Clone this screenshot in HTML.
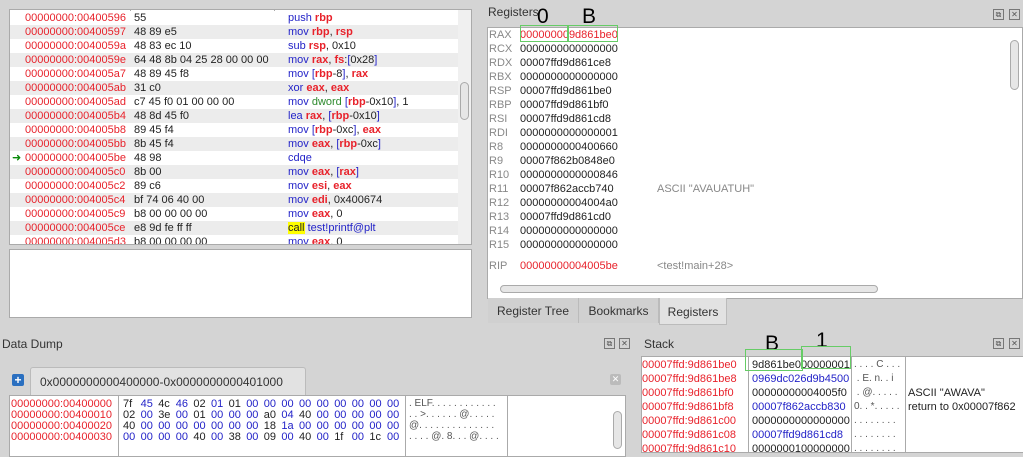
<!DOCTYPE html>
<html><head><style>
body{margin:0;width:1023px;height:447px;background:#d4d4d4;font-family:"Liberation Sans","DejaVu Sans",sans-serif;font-size:11px;position:relative;overflow:hidden;color:#222}
.a{position:absolute}
.box{position:absolute;background:#fff;border:1px solid #aaa}
.r{color:#e8222b}.b{color:#2323c8}.g{color:#2d8a2d}.rb{color:#e8222b;font-weight:bold}
.row{position:absolute;left:0;height:14px;line-height:14px;white-space:pre}
.sb{position:absolute;background:#e6e6e6;border:1px solid #aaa;border-radius:6px}
.lbl{position:absolute;font-size:21px;color:#000;line-height:21px}
.gb{position:absolute;border:1px solid #6c6}
.ic{position:absolute;width:9px;height:9px;border:1px solid #777;font-size:8px;line-height:9px;text-align:center;color:#555}
</style></head><body>
<div class="box" style="left:9px;top:9px;width:461px;height:234px;overflow:hidden">
<div class="a" style="left:120px;top:0;width:1px;height:234px;background:#aaa"></div>
<div class="a" style="left:264px;top:0;width:1px;height:234px;background:#aaa"></div>
<div id="dis"></div>
<div class="a" style="left:448px;top:0;width:13px;height:234px;background:#f0f0f0"></div>
<div class="sb" style="left:450px;top:72px;width:7px;height:36px"></div>
</div>
<div class="box" style="left:9px;top:249px;width:461px;height:67px"></div>

<div class="a" style="left:488px;top:5px;font-size:12px;color:#333">Registers</div>
<div class="ic" style="left:993px;top:9px">⧉</div><div class="ic" style="left:1009px;top:9px">✕</div>
<div class="box" style="left:487px;top:27px;width:534px;height:270px;background:#fff"></div>
<div id="regs"></div>
<div class="sb" style="left:1010px;top:40px;width:7px;height:48px"></div>
<div class="sb" style="left:500px;top:285px;width:376px;height:6px"></div>
<div class="a" style="left:488px;top:298px;width:90px;height:25px;background:#d0d0d0;border-right:1px solid #bbb;line-height:26px;text-align:center;font-size:12px;color:#333">Register Tree</div>
<div class="a" style="left:579px;top:298px;width:79px;height:25px;background:#d0d0d0;border-right:1px solid #bbb;line-height:26px;text-align:center;font-size:12px;color:#333">Bookmarks</div>
<div class="a" style="left:659px;top:298px;width:66px;height:26px;background:#e2e2e2;border:1px solid #bbb;border-top:none;line-height:28px;text-align:center;font-size:12px;color:#333">Registers</div>
<div class="lbl" style="left:537px;top:6px">0</div>
<div class="lbl" style="left:582px;top:6px">B</div>
<div class="gb" style="left:520px;top:25px;width:47px;height:15px"></div>
<div class="gb" style="left:567px;top:25px;width:49px;height:15px"></div>

<div class="a" style="left:2px;top:337px;font-size:12px;color:#333">Data Dump</div>
<div class="ic" style="left:604px;top:338px">⧉</div><div class="ic" style="left:619px;top:338px">✕</div>
<div class="a" style="left:12px;top:374px;width:12px;height:12px;background:#2a6fc0;border-radius:2px;color:#fff;font-size:12px;line-height:12px;text-align:center;font-weight:bold">+</div>
<div class="a" style="left:30px;top:367px;width:276px;height:28px;background:#e2e2e2;border:1px solid #bbb;border-bottom:none;border-radius:3px 3px 0 0;line-height:28px;font-size:12px;color:#333;padding-left:9px;box-sizing:border-box">0x0000000000400000-0x0000000000401000</div>
<div class="a" style="left:610px;top:374px;width:11px;height:11px;background:#bbb;border-radius:2px;color:#fff;font-size:9px;line-height:11px;text-align:center">✕</div>
<div class="box" style="left:9px;top:395px;width:615px;height:60px;overflow:hidden">
<div class="a" style="left:108px;top:0;width:1px;height:60px;background:#aaa"></div>
<div class="a" style="left:395px;top:0;width:1px;height:60px;background:#aaa"></div>
<div class="a" style="left:497px;top:0;width:1px;height:60px;background:#aaa"></div>
<div id="dump"></div>
<div class="sb" style="left:603px;top:15px;width:7px;height:36px"></div>
</div>

<div class="a" style="left:644px;top:337px;font-size:12px;color:#333">Stack</div>
<div class="ic" style="left:993px;top:338px">⧉</div><div class="ic" style="left:1009px;top:338px">✕</div>
<div class="box" style="left:641px;top:356px;width:382px;height:95px;overflow:hidden;border-right:none">
<div class="a" style="left:106px;top:0;width:1px;height:95px;background:#aaa"></div>
<div class="a" style="left:209px;top:0;width:1px;height:95px;background:#aaa"></div>
<div class="a" style="left:263px;top:0;width:1px;height:95px;background:#aaa"></div>
<div id="stk"></div>
</div>
<div class="lbl" style="left:765px;top:333px">B</div>
<div class="lbl" style="left:816px;top:330px">1</div>
<div class="gb" style="left:745px;top:349px;width:56px;height:20px"></div>
<div class="gb" style="left:801px;top:346px;width:48px;height:21px"></div>

<script>
const d=[
["00400596","55",'<span class="b">push </span><span class="rb">rbp</span>'],
["00400597","48 89 e5",'<span class="b">mov </span><span class="rb">rbp</span>, <span class="rb">rsp</span>'],
["0040059a","48 83 ec 10",'<span class="b">sub </span><span class="rb">rsp</span>, 0x10'],
["0040059e","64 48 8b 04 25 28 00 00 00",'<span class="b">mov </span><span class="rb">rax</span>, <span class="rb">fs</span>:<span class="b">[</span>0x28<span class="b">]</span>'],
["004005a7","48 89 45 f8",'<span class="b">mov [</span><span class="rb">rbp</span>-8<span class="b">]</span>, <span class="rb">rax</span>'],
["004005ab","31 c0",'<span class="b">xor </span><span class="rb">eax</span>, <span class="rb">eax</span>'],
["004005ad","c7 45 f0 01 00 00 00",'<span class="b">mov </span><span class="g">dword</span> <span class="b">[</span><span class="rb">rbp</span>-0x10<span class="b">]</span>, 1'],
["004005b4","48 8d 45 f0",'<span class="b">lea </span><span class="rb">rax</span>, <span class="b">[</span><span class="rb">rbp</span>-0x10<span class="b">]</span>'],
["004005b8","89 45 f4",'<span class="b">mov [</span><span class="rb">rbp</span>-0xc<span class="b">]</span>, <span class="rb">eax</span>'],
["004005bb","8b 45 f4",'<span class="b">mov </span><span class="rb">eax</span>, <span class="b">[</span><span class="rb">rbp</span>-0xc<span class="b">]</span>'],
["004005be","48 98",'<span class="b">cdqe</span>'],
["004005c0","8b 00",'<span class="b">mov </span><span class="rb">eax</span>, <span class="b">[</span><span class="rb">rax</span><span class="b">]</span>'],
["004005c2","89 c6",'<span class="b">mov </span><span class="rb">esi</span>, <span class="rb">eax</span>'],
["004005c4","bf 74 06 40 00",'<span class="b">mov </span><span class="rb">edi</span>, 0x400674'],
["004005c9","b8 00 00 00 00",'<span class="b">mov </span><span class="rb">eax</span>, 0'],
["004005ce","e8 9d fe ff ff",'<span style="background:#ff0">call</span> <span class="b">test!printf@plt</span>'],
["004005d3","b8 00 00 00 00",'<span class="b">mov </span><span class="rb">eax</span>, 0']];
let h='';d.forEach((x,i)=>{h+=`<div class="row" style="top:${1+i*14}px;width:448px;background:${i%2?'#ececec':'#fff'}">`+
`<span class="a" style="left:2px;color:#0a8a0a">${i==10?'➜':''}</span><span class="a r" style="left:15px">00000000:${x[0]}</span><span class="a" style="left:124px">${x[1]}</span><span class="a" style="left:278px">${x[2]}</span></div>`});
document.getElementById('dis').innerHTML=h;
const r=[["RAX","000000009d861be0"],["RCX","0000000000000000"],["RDX","00007ffd9d861ce8"],["RBX","0000000000000000"],["RSP","00007ffd9d861be0"],["RBP","00007ffd9d861bf0"],["RSI","00007ffd9d861cd8"],["RDI","0000000000000001"],["R8","0000000000400660"],["R9","00007f862b0848e0"],["R10","0000000000000846"],["R11","00007f862accb740","ASCII \"AVAUATUH\""],["R12","00000000004004a0"],["R13","00007ffd9d861cd0"],["R14","0000000000000000"],["R15","0000000000000000"]];
h='';r.forEach((x,i)=>{let y=28+i*14;h+=`<div class="row" style="top:${y}px;left:489px;color:#888">${x[0]}</div><div class="row ${i==0?'r':''}" style="top:${y}px;left:520px;font-size:11px">${x[1]}</div>`+(x[2]?`<div class="row" style="top:${y}px;left:657px;color:#888">${x[2]}</div>`:'')});
h+=`<div class="row" style="top:259px;left:489px;color:#888">RIP</div><div class="row r" style="top:259px;left:520px;font-size:11px">00000000004005be</div><div class="row" style="top:259px;left:657px;color:#888">&lt;test!main+28&gt;</div>`;
document.getElementById('regs').innerHTML=h;
const dm=[["00400000","7f 45 4c 46 02 01 01 00 00 00 00 00 00 00 00 00",". ELF. . . . . . . . . . . ."],["00400010","02 00 3e 00 01 00 00 00 a0 04 40 00 00 00 00 00",". . >. . . . . . @. . . . ."],["00400020","40 00 00 00 00 00 00 00 18 1a 00 00 00 00 00 00","@. . . . . . . . . . . . . ."],["00400030","00 00 00 00 40 00 38 00 09 00 40 00 1f 00 1c 00",". . . . @. 8. . . @. . . ."]];
h='';dm.forEach((x,i)=>{let y=i*11+1;h+=`<div class="row r" style="top:${y}px;left:1px;font-size:11px">00000000:${x[0]}</div>`;x[1].split(' ').forEach((b,j)=>{h+=`<div class="row ${b=='00'||j%2?'b':''}" style="top:${y}px;left:${113+j*17.6}px;font-size:11px">${b}</div>`});h+=`<div class="row" style="top:${y}px;left:399px;font-size:10px;color:#555">${x[2]}</div>`});
document.getElementById('dump').innerHTML=h;
const s=[["be0","9d861be000000001",0,". . . . C . . ."],["be8","0969dc026d9b4500",1," . E. n. . i"],["bf0","00000000004005f0",0," . @. . . . .","ASCII \"AWAVA\""],["bf8","00007f862accb830",1,"0. . *. . . . .","return to 0x00007f862"],["c00","0000000000000000",0,". . . . . . . ."],["c08","00007ffd9d861cd8",1,". . . . . . . ."],["c10","0000000100000000",0,". . . . . . . ."]];
h='';s.forEach((x,i)=>{let y=1+i*14;h+=`<div class="row r" style="top:${y}px;left:0">00007ffd:9d861${x[0]}</div><div class="row ${x[2]?'b':''}" style="top:${y}px;left:110px">${x[1]}</div><div class="row" style="top:${y}px;left:212px;color:#555;font-size:10px">${x[3]}</div>`+(x[4]?`<div class="row" style="top:${y}px;left:266px">${x[4]}</div>`:'')});
document.getElementById('stk').innerHTML=h;
</script>
</body></html>
